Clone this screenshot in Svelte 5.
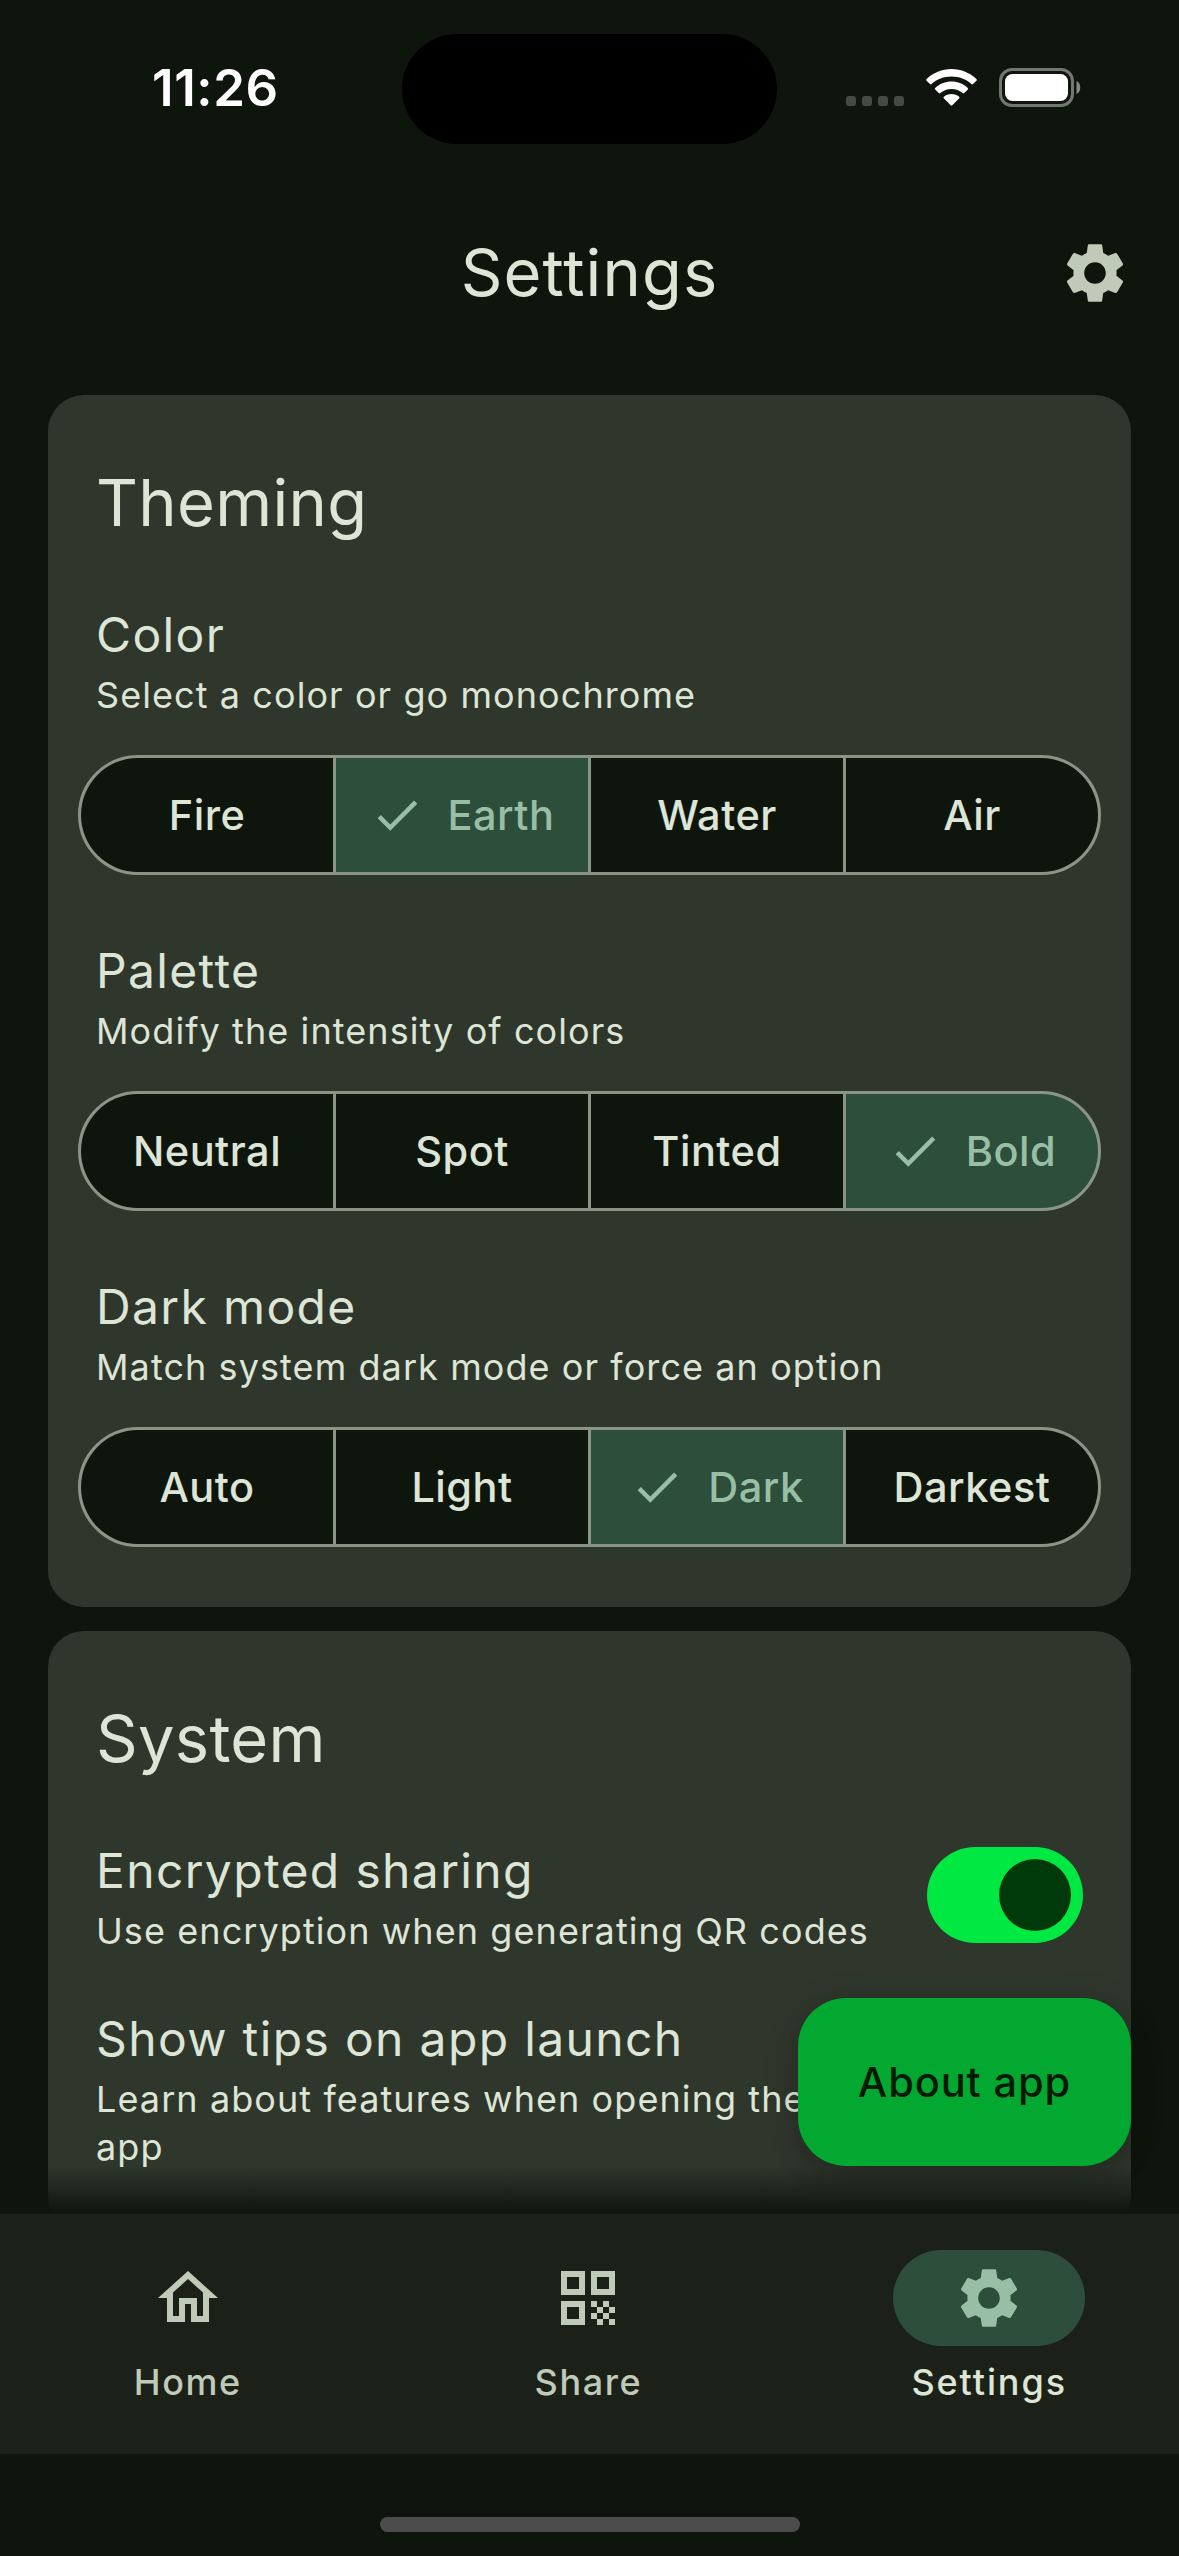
<script>
  const checkPath = 'M9 16.17 4.83 12l-1.42 1.41L9 19 21 7l-1.41-1.41z';
  const gearPath =
    'M19.14 12.94c.04-.3.06-.61.06-.94 0-.32-.02-.64-.07-.94l2.03-1.58c.18-.14.23-.41.12-.61l-1.92-3.32c-.12-.22-.37-.29-.59-.22l-2.39.96c-.5-.38-1.03-.7-1.62-.94l-.36-2.54c-.04-.24-.24-.41-.48-.41h-3.84c-.24 0-.43.17-.47.41l-.36 2.54c-.59.24-1.13.57-1.62.94l-2.39-.96c-.22-.08-.47 0-.59.22L2.74 8.87c-.12.21-.08.47.12.61l2.03 1.58c-.05.3-.09.63-.09.94s.02.64.07.94l-2.03 1.58c-.18.14-.23.41-.12.61l1.92 3.32c.12.22.37.29.59.22l2.39-.96c.5.38 1.03.7 1.62.94l.36 2.54c.05.24.24.41.48.41h3.84c.24 0 .44-.17.47-.41l.36-2.54c.59-.24 1.13-.56 1.62-.94l2.39.96c.22.08.47 0 .59-.22l1.92-3.32c.12-.22.07-.47-.12-.61l-2.01-1.58zM12 15.6c-1.98 0-3.6-1.62-3.6-3.6s1.62-3.6 3.6-3.6 3.6 1.62 3.6 3.6-1.62 3.6-3.6 3.6z';
  const homePath =
    'M12 5.69l5 4.5V18h-2v-6H9v6H7v-7.81l5-4.5M12 3L2 12h3v8h6v-6h2v6h6v-8h3L12 3z';
  const qrPath =
    'M3 11h8V3H3v8zm2-6h4v4H5V5zM3 21h8v-8H3v8zm2-6h4v4H5v-4zM13 3v8h8V3h-8zm6 6h-4V5h4v4zM19 19h2v2h-2zM13 13h2v2h-2zM15 15h2v2h-2zM13 17h2v2h-2zM15 19h2v2h-2zM17 17h2v2h-2zM17 13h2v2h-2zM19 15h2v2h-2z';

  let groups = $state([
    { title: 'Color', hint: 'Select a color or go monochrome', options: ['Fire', 'Earth', 'Water', 'Air'], selected: 'Earth' },
    { title: 'Palette', hint: 'Modify the intensity of colors', options: ['Neutral', 'Spot', 'Tinted', 'Bold'], selected: 'Bold' },
    { title: 'Dark mode', hint: 'Match system dark mode or force an option', options: ['Auto', 'Light', 'Dark', 'Darkest'], selected: 'Dark' }
  ]);
  let toggles = $state([
    { title: 'Encrypted sharing', hint: 'Use encryption when generating QR codes', on: true },
    { title: 'Show tips on app launch', hint: 'Learn about features when opening the app', on: true }
  ]);
  const tabs = [
    { label: 'Home', path: homePath },
    { label: 'Share', path: qrPath },
    { label: 'Settings', path: gearPath }
  ];
  let current = $state('Settings');
</script>

<div class="screen">
  <div class="status">
    <span class="time">11:26</span>
    <span class="island"></span>
    <div class="indicators">
      <div class="dots"><i></i><i></i><i></i><i></i></div>
      <svg class="wifi" viewBox="0 0 51 37">
        <path d="M25.5 0C35.200 0 44 3.800 50.400 10.100Q51.200 10.900 50.400 11.700L47 15.100Q46.200 15.800 45.400 15.100C40.200 10.200 33.200 7.500 25.500 7.500S10.800 10.200 5.600 15.100Q4.800 15.800 4 15.100L.6 11.700Q-.2 10.900.6 10.100C7 3.800 15.800 0 25.500 0z" />
        <path d="M25.500 12.600C31.800 12.600 37.500 15 41.800 19Q42.600 19.800 41.800 20.600L38.300 24Q37.500 24.800 36.700 24.100C33.700 21.400 29.800 19.900 25.500 19.900S17.300 21.400 14.300 24.100Q13.500 24.800 12.700 24L9.200 20.600Q8.400 19.800 9.200 19C13.500 15 19.200 12.600 25.500 12.600z" />
        <path d="M25.500 25C28.400 25 31 26 33.100 27.700Q34 28.500 33.200 29.300L26.300 36.200Q25.500 36.900 24.700 36.200L17.800 29.300Q17 28.500 17.900 27.700C20 26 22.600 25 25.500 25z" />
      </svg>
      <svg class="battery" viewBox="0 0 82 39">
        <rect x="1.5" y="1.500" width="72" height="36" rx="11.500" fill="none" stroke="#fff" stroke-opacity=".42" stroke-width="3" />
        <rect x="6" y="6" width="63" height="27" rx="7.500" fill="#fff" />
        <path d="M77.500 13c5 2 5 11 0 13z" fill="#fff" fill-opacity=".5" />
      </svg>
    </div>
  </div>

  <header>
    <h1>Settings</h1>
    <button class="gear" aria-label="Settings"><svg viewBox="0 0 24 24"><path d={gearPath} /></svg></button>
  </header>

  <main>
    <section>
      <h2>Theming</h2>
      {#each groups as group}
        <div class="group">
          <h3>{group.title}</h3>
          <p>{group.hint}</p>
          <div class="segments">
            {#each group.options as option}
              <button class:on={group.selected === option} onclick={() => (group.selected = option)}>
                {#if group.selected === option}
                  <svg viewBox="0 0 24 24"><path d={checkPath} /></svg>
                {/if}
                <span>{option}</span>
              </button>
            {/each}
          </div>
        </div>
      {/each}
    </section>

    <section>
      <h2>System</h2>
      {#each toggles as item}
        <div class="row">
          <div class="copy">
            <h3>{item.title}</h3>
            <p>{item.hint}</p>
          </div>
          <button class="switch" class:on={item.on} aria-label={item.title} onclick={() => (item.on = !item.on)}><i></i></button>
        </div>
      {/each}
    </section>

    <button class="about">About app</button>
    <div class="fade"></div>
  </main>

  <nav>
    {#each tabs as tab}
      <button class:active={current === tab.label} onclick={() => (current = tab.label)}>
        <span class="pill"><svg viewBox="0 0 24 24"><path d={tab.path} /></svg></span>
        <span class="label">{tab.label}</span>
      </button>
    {/each}
  </nav>
  <footer><i></i></footer>
</div>

<style>
  :global(body) {
    margin: 0;
    background: #0e150d;
  }
  .screen {
    width: 1179px;
    height: 2556px;
    display: flex;
    flex-direction: column;
    overflow: hidden;
    background: #0e150d;
    color: #dde5d6;
    font-family: Inter, 'Liberation Sans', sans-serif;
  }
  button {
    border: 0;
    margin: 0;
    padding: 0;
    background: none;
    color: inherit;
    font: inherit;
  }
  h1, h2, h3, p {
    margin: 0;
    font-weight: 400;
  }
  svg {
    display: block;
    fill: currentColor;
    flex: none;
  }

  .status {
    height: 177px;
    box-sizing: border-box;
    padding: 34px 98px 0 30px;
    display: grid;
    grid-template-columns: 372px 375px 1fr;
    align-items: start;
    color: #fff;
  }
  .time {
    padding-left: 122px;
    font-size: 51px;
    font-weight: 600;
    line-height: 72px;
    margin-top: 18px;
    letter-spacing: 0.6px;
  }
  .island {
    height: 110px;
    border-radius: 55px;
    background: #000;
  }
  .indicators {
    display: flex;
    justify-content: flex-end;
    align-items: flex-end;
    height: 73px;
  }
  .dots {
    display: flex;
    gap: 6px;
    margin: 0 22px 1px 0;
  }
  .dots i {
    width: 10px;
    height: 10px;
    border-radius: 3px;
    background: #454a44;
  }
  .wifi {
    width: 51px;
    height: 37px;
    margin: 0 22px 1px 0;
  }
  .battery {
    width: 82px;
    height: 39px;
  }

  header {
    height: 192px;
    flex: none;
    display: grid;
    grid-template-columns: 120px 1fr 120px;
    align-items: center;
  }
  h1 {
    grid-column: 2;
    text-align: center;
    font-size: 65px;
    line-height: 84px;
    letter-spacing: 1.1px;
  }
  .gear {
    justify-self: end;
    margin-right: 48px;
    color: #bfcab9;
  }
  .gear svg,
  .pill svg {
    width: 72px;
    height: 72px;
  }

  main {
    position: relative;
    flex: none;
    height: 1845px;
    box-sizing: border-box;
    padding: 26px 48px 0;
    overflow: hidden;
  }
  section {
    box-sizing: border-box;
    padding: 66px 30px 60px;
    border-radius: 36px;
    background: #2f362c;
  }
  section + section {
    margin-top: 24px;
  }
  h2 {
    padding-left: 18px;
    margin-bottom: 54px;
    font-size: 65px;
    line-height: 84px;
    letter-spacing: 0.3px;
  }
  h3 {
    font-size: 48px;
    line-height: 72px;
    letter-spacing: 1.35px;
  }
  p {
    font-size: 36px;
    line-height: 48px;
    letter-spacing: 1.08px;
  }
  .group h3,
  .group p {
    padding-left: 18px;
  }
  .group + .group {
    margin-top: 60px;
  }
  .segments {
    margin-top: 36px;
    height: 120px;
    box-sizing: border-box;
    border: 3px solid #8a9685;
    border-radius: 60px;
    background: #8a9685;
    overflow: hidden;
    display: grid;
    grid-template-columns: repeat(4, 1fr);
    gap: 3px;
  }
  .segments button {
    display: flex;
    align-items: center;
    justify-content: center;
    gap: 24px;
    background: #0e150d;
    font-size: 41.5px;
    font-weight: 550;
    letter-spacing: 0.5px;
    white-space: nowrap;
  }
  .segments .on {
    background: #2c4e3b;
    color: #98bfa6;
  }
  .segments svg {
    width: 54px;
    height: 54px;
  }

  .row {
    display: flex;
    align-items: center;
    justify-content: space-between;
    padding: 0 18px;
  }
  .row + .row {
    margin-top: 48px;
  }
  .copy {
    width: 783px;
  }
  .switch {
    width: 156px;
    height: 96px;
    box-sizing: border-box;
    padding: 12px;
    border-radius: 48px;
    background: #454c42;
    display: flex;
  }
  .switch i {
    width: 72px;
    height: 72px;
    border-radius: 50%;
    background: #8a9685;
  }
  .switch.on {
    justify-content: flex-end;
    background: #00e943;
  }
  .switch.on i {
    background: #00390a;
  }

  /* Floating action over the scrolling list */
  .about {
    position: absolute;
    right: 48px;
    bottom: 48px;
    width: 333px;
    height: 168px;
    border-radius: 48px;
    background: #02a82f;
    color: #001a03;
    font-size: 41.5px;
    font-weight: 500;
    letter-spacing: 0.9px;
    box-shadow: 0 12px 24px rgba(0, 0, 0, 0.16), 0 4px 40px rgba(0, 0, 0, 0.08);
  }
  .fade {
    position: absolute;
    left: 0;
    right: 0;
    bottom: 0;
    height: 48px;
    background: linear-gradient(rgba(14, 21, 13, 0), #0e150d);
  }

  nav {
    height: 240px;
    flex: none;
    box-sizing: border-box;
    padding-right: 2px;
    display: grid;
    grid-template-columns: repeat(3, 1fr);
    gap: 25px;
    background: #1b2118;
    color: #bfcab9;
  }
  nav button {
    display: flex;
    flex-direction: column;
    align-items: center;
    padding-top: 36px;
  }
  .pill {
    width: 192px;
    height: 96px;
    border-radius: 48px;
    display: grid;
    place-items: center;
  }
  .active .pill {
    background: #2c4e3b;
    color: #98bfa6;
  }
  .label {
    margin-top: 12px;
    font-size: 36px;
    line-height: 48px;
    font-weight: 500;
    letter-spacing: 1.6px;
  }
  .active .label {
    color: #dde5d6;
    font-weight: 550;
    letter-spacing: 1.9px;
  }
  footer {
    flex: 1;
    display: flex;
    justify-content: center;
    align-items: flex-end;
    padding-bottom: 24px;
  }
  footer i {
    width: 420px;
    height: 15px;
    border-radius: 8px;
    background: #4c4c4c;
  }
</style>
